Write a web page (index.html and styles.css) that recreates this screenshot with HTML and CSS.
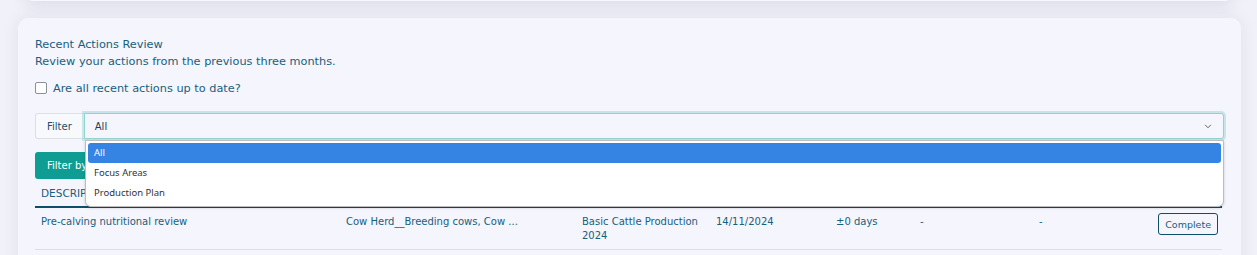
FILE: index.html
```html
<!DOCTYPE html>
<html>
<head>
<meta charset="utf-8">
<link rel="stylesheet" href="styles.css">
</head>
<body>
<div class="page">
  <div class="topcard"></div>
  <section class="card">
    <div class="title">Recent Actions Review</div>
    <div class="sub">Review your actions from the previous three months.</div>
    <label class="check"><span class="box"></span>Are all recent actions up to date?</label>
    <div class="filter-group">
      <span class="flabel">Filter</span>
      <div class="select">
        <span>All</span>
        <svg class="chev" width="9" height="6" viewBox="0 0 9 6"><path d="M1 1 L4.5 4.5 L8 1" fill="none" stroke="#555" stroke-width="1.1"/></svg>
      </div>
      <ul class="dropdown">
        <li class="sel">All</li>
        <li>Focus Areas</li>
        <li>Production Plan</li>
      </ul>
    </div>
    <button class="btn-filter">Filter by type</button>
    <table class="actions">
      <colgroup>
        <col style="width:305px"><col style="width:236px"><col style="width:134px"><col style="width:120px"><col style="width:84px"><col style="width:119px"><col style="width:119px"><col>
      </colgroup>
      <thead>
        <tr><th>DESCRIPTION</th><th>ENTERPRISE</th><th>PLAN</th><th>DUE DATE</th><th>VARIANCE</th><th>COMPLETED</th><th>NOTES</th><th></th></tr>
      </thead>
      <tbody>
        <tr>
          <td>Pre-calving nutritional review</td>
          <td>Cow Herd__Breeding cows, Cow ...</td>
          <td>Basic Cattle Production 2024</td>
          <td>14/11/2024</td>
          <td>±0 days</td>
          <td>-</td>
          <td>-</td>
          <td class="act"><button class="btn-complete">Complete</button></td>
        </tr>
      </tbody>
    </table>
  </section>
</div>
</body>
</html>
```

FILE: styles.css
```css
html, body {
  margin: 0;
  padding: 0;
  background: #f1f1f9;
  font-family: "DejaVu Sans", sans-serif;
  color: #17607d;
}
.page {
  width: 1257px;
  height: 255px;
  overflow: hidden;
}
.topcard {
  margin: -40px 24px 0 25px;
  height: 41px;
  background: #f7f7fd;
  border-radius: 0 0 8px 8px;
  box-shadow: 0 4px 16px rgba(40, 40, 80, 0.10);
}
.card {
  margin: 17px 16px 0 18px;
  background: #f5f5fd;
  border-radius: 10px;
  box-shadow: 0 0 18px rgba(40, 40, 80, 0.08);
  padding: 18px 17px 20px 17px;
  height: 300px;
}
.title, .sub {
  font-size: 11.3px;
  line-height: 17px;
}
.check {
  display: flex;
  align-items: center;
  gap: 6px;
  font-size: 11.3px;
  margin-top: 10px;
  height: 16px;
}
.box {
  width: 10px;
  height: 10px;
  border: 1px solid #8a8f99;
  border-radius: 2px;
  background: #fff;
}
.filter-group {
  position: relative;
  display: flex;
  margin-top: 17px;
  height: 26px;
}
.flabel {
  display: flex;
  align-items: center;
  padding: 0 12px 0 11px;
  font-size: 10px;
  color: #1d4f66;
  background: #f8f9fc;
  border: 1px solid #dcdfe6;
  border-right: none;
  border-radius: 3px 0 0 3px;
}
.select {
  flex: 1;
  display: flex;
  align-items: center;
  justify-content: space-between;
  padding: 0 11px 0 10px;
  font-size: 10px;
  color: #1d3f55;
  background: #f5f5fd;
  border: 1px solid #93d2ce;
  border-radius: 0 3px 3px 0;
  box-shadow: 0 0 0 2px rgba(140, 210, 205, 0.45);
}
.chev {
  width: 8px;
  height: 5px;
}
.dropdown {
  position: absolute;
  left: 50px;
  right: 0;
  top: 27px;
  margin: 0;
  padding: 2px 2px 3px 2px;
  list-style: none;
  background: #fff;
  border: 1px solid #bdbdbd;
  border-radius: 0 0 6px 6px;
  box-shadow: 0 1px 3px rgba(0,0,0,0.18);
  font-family: "Noto Sans", sans-serif;
  font-size: 9.5px;
  color: #333;
  z-index: 5;
}
.dropdown li {
  height: 20px;
  line-height: 20px;
  padding-left: 6px;
}
.dropdown li.sel {
  background: #3584e4;
  color: #fff;
  border-radius: 3px;
}
.btn-filter {
  display: block;
  margin-top: 13px;
  height: 27px;
  padding: 0 12px;
  background: #0e9d92;
  color: #fff;
  border: none;
  border-radius: 3px;
  font-family: "DejaVu Sans", sans-serif;
  font-size: 10px;
}
.actions {
  width: 1187px;
  border-collapse: collapse;
  table-layout: fixed;
  font-size: 10px;
  margin-top: 1px;
}
.actions th {
  text-align: left;
  font-weight: normal;
  font-size: 10.5px;
  height: 26px;
  padding: 0 6px;
  border-bottom: 2px solid #0f4e6a;
  white-space: nowrap;
  overflow: hidden;
}
.actions td {
  vertical-align: top;
  padding: 7px 6px 0 6px;
  height: 34px;
  line-height: 14px;
  border-bottom: 1px solid #dedfe6;
}
.actions td.act {
  text-align: right;
  padding: 5px 4px 0 0;
}
.btn-complete {
  height: 22px;
  padding: 0 6px;
  background: transparent;
  border: 1px solid #0f4e6a;
  border-radius: 3px;
  color: #17607d;
  font-family: "DejaVu Sans", sans-serif;
  font-size: 9.5px;
}
```
